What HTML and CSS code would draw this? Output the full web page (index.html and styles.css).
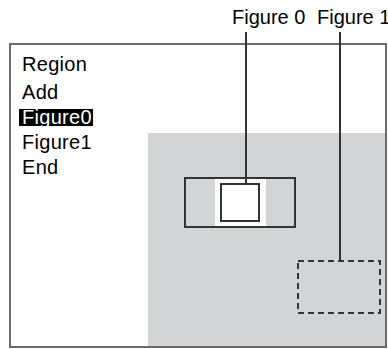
FILE: index.html
```html
<!DOCTYPE html>
<html>
<head>
    <link rel="stylesheet" href="styles.css">
</head>
<body>

<div class="page">
    <div class="label label-0">Figure 0</div>
    <div class="label label-1">Figure 1</div>

    <div class="screen">
        <ul class="menu">
            <li class="title">Region</li>
            <li>Add</li>
            <li><span class="selected">Figure0</span></li>
            <li>Figure1</li>
            <li>End</li>
        </ul>

        <div class="view">
            <div class="window">
                <div class="clear">
                    <div class="figure0"></div>
                </div>
            </div>
            <svg class="figure1" width="84" height="54" viewBox="0 0 84 54">
                <rect x="1" y="1" width="82" height="52" fill="none" stroke="#333" stroke-width="2" stroke-dasharray="6 4"></rect>
            </svg>
        </div>
    </div>

    <!-- leader lines from the labels to the figures -->
    <div class="leader leader-0"></div>
    <div class="leader leader-1"></div>
</div>

</body>
</html>
```

FILE: styles.css
```css
body {
    margin: 0;
    font-family: "Liberation Sans", Arial, sans-serif;
    background: #fff;
    color: #000;
}

.page {
    position: relative;
    width: 388px;
    height: 349px;
    overflow: hidden;
}

.label {
    position: absolute;
    top: 7px;
    font-size: 20px;
    line-height: 20px;
    white-space: nowrap;
}

.label-0 {
    left: 232px;
}

.label-1 {
    left: 317px;
}

.screen {
    position: relative;
    margin: 43px 0 0 9px;
    width: 378px;
    height: 305px;
    box-sizing: border-box;
    border: 2px solid #6a6a6a;
}

.menu {
    list-style: none;
    margin: 0;
    padding: 7px 0 0 11px;
    font-size: 20px;
    line-height: 25px;
    letter-spacing: 0.3px;
}

.menu .title {
    margin-bottom: 3px;
}

.selected {
    display: inline-block;
    line-height: 17px;
    margin-left: -3px;
    padding: 0 1px 0 3px;
    background: #000;
    color: #fff;
}

.view {
    position: absolute;
    left: 137px;
    top: 88px;
    right: 0;
    bottom: 0;
    background: #d3d4d6;
}

.window {
    position: absolute;
    left: 36px;
    top: 44px;
    width: 112px;
    height: 51px;
    box-sizing: border-box;
    border: 2px solid #333;
    display: flex;
    justify-content: center;
}

.clear {
    width: 51px;
    background: #fff;
    display: flex;
    align-items: center;
    justify-content: center;
}

.figure0 {
    width: 40px;
    height: 39px;
    box-sizing: border-box;
    border: 2px solid #333;
    background: #fff;
}

.figure1 {
    position: absolute;
    left: 149px;
    top: 127px;
}

.leader {
    position: absolute;
    top: 32px;
    width: 2px;
    background: #333;
}

.leader-0 {
    left: 245px;
    height: 151px;
}

.leader-1 {
    left: 339px;
    height: 228px;
}
```
